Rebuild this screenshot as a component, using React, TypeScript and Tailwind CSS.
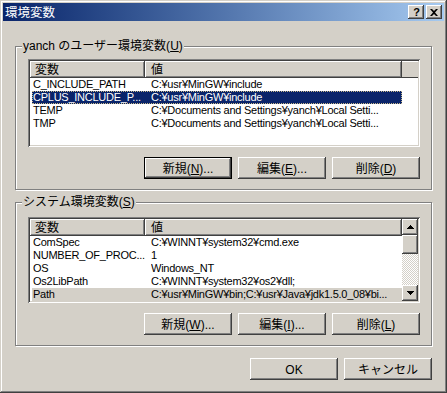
import React from "react";

const RAISED =
  "shadow-[inset_-1px_-1px_#404040,inset_1px_1px_#ffffff,inset_-2px_-2px_#808080,inset_2px_2px_#d4d0c8]";
const DEFAULT_BTN =
  "shadow-[inset_0_0_0_1px_#000000,inset_-2px_-2px_#404040,inset_2px_2px_#ffffff,inset_-3px_-3px_#808080]";
const SUNKEN =
  "shadow-[inset_1px_1px_#808080,inset_-1px_-1px_#ffffff,inset_2px_2px_#404040,inset_-2px_-2px_#d4d0c8]";
const FRAME =
  "shadow-[inset_-1px_-1px_#404040,inset_1px_1px_#d4d0c8,inset_-2px_-2px_#808080,inset_2px_2px_#ffffff]";
const HEADER =
  "shadow-[inset_-1px_-1px_#404040,inset_1px_1px_#ffffff,inset_-2px_-2px_#808080]";

const U = ({ c }: { c: string }) => (
  <span className="underline underline-offset-[1px] decoration-1">{c}</span>
);

function Btn({ children, def }: { children: React.ReactNode; def?: boolean }) {
  return (
    <div
      className={`h-[22px] w-[88px] flex items-center justify-center text-[12px] leading-none text-black bg-[#d4d0c8] ${
        def ? DEFAULT_BTN : RAISED
      }`}
    >
      <span className="pt-[1px]">{children}</span>
    </div>
  );
}

type Row = { name: string; value: string; sel?: "active" | "inactive" };

const userRows: Row[] = [
  { name: "C_INCLUDE_PATH", value: "C:¥usr¥MinGW¥include" },
  { name: "CPLUS_INCLUDE_P...", value: "C:¥usr¥MinGW¥include", sel: "active" },
  { name: "TEMP", value: "C:¥Documents and Settings¥yanch¥Local Setti..." },
  { name: "TMP", value: "C:¥Documents and Settings¥yanch¥Local Setti..." },
];

const sysRows: Row[] = [
  { name: "ComSpec", value: "C:¥WINNT¥system32¥cmd.exe" },
  { name: "NUMBER_OF_PROC...", value: "1" },
  { name: "OS", value: "Windows_NT" },
  { name: "Os2LibPath", value: "C:¥WINNT¥system32¥os2¥dll;" },
  {
    name: "Path",
    value: "C:¥usr¥MinGW¥bin;C:¥usr¥Java¥jdk1.5.0_08¥bi...",
    sel: "inactive",
  },
];

function Header() {
  return (
    <div className="h-[17px] flex shrink-0 text-[12px] leading-none text-black">
      <div className={`w-[115px] h-full bg-[#d4d0c8] ${HEADER} flex items-center pl-[5px]`}>
        変数
      </div>
      <div className={`w-[257px] h-full bg-[#d4d0c8] ${HEADER} flex items-center pl-[6px]`}>
        値
      </div>
      <div className="flex-1 h-full bg-[#d4d0c8] shadow-[inset_0_-1px_#404040,inset_0_1px_#ffffff]" />
    </div>
  );
}

function Rows({ rows }: { rows: Row[] }) {
  return (
    <div className="flex flex-col">
      {rows.map((r, i) => {
        const cls =
          r.sel === "active"
            ? "bg-[#0a246a] text-white outline-1 outline-dotted outline-[#c8b98a] -outline-offset-1"
            : r.sel === "inactive"
            ? "bg-[#d4d0c8] text-black"
            : "text-black";
        return (
          <div key={i} className="h-[13px] flex pl-[2px]">
            <div
              className={`w-[370px] h-full flex items-center text-[11px] tracking-[-0.25px] leading-none whitespace-nowrap overflow-hidden ${cls}`}
            >
              <div className="w-[119px] shrink-0 pl-[1px] overflow-hidden">{r.name}</div>
              <div className="flex-1 min-w-0 overflow-hidden">{r.value}</div>
            </div>
          </div>
        );
      })}
    </div>
  );
}

function Arrow({ up }: { up?: boolean }) {
  return (
    <svg width="7" height="4" viewBox="0 0 7 4">
      {up ? (
        <path d="M3 0h1v1h1v1h1v1h1v1H0V3h1V2h1V1h1z" fill="#000" />
      ) : (
        <path d="M0 0h7v1H6v1H5v1H4v1H3V3H2V2H1V1H0z" fill="#000" />
      )}
    </svg>
  );
}

function GroupBox({
  label,
  padTop,
  children,
}: {
  label: React.ReactNode;
  padTop: string;
  children: React.ReactNode;
}) {
  return (
    <div
      className={`relative h-[144px] border border-[#808080] shadow-[inset_1px_1px_#ffffff,1px_1px_#ffffff] pl-[12px] ${padTop} flex flex-col`}
    >
      <div className="absolute left-[6px] top-[-8px] px-[1px] bg-[#d4d0c8] text-[12px] leading-[14px] text-black whitespace-nowrap">
        {label}
      </div>
      {children}
    </div>
  );
}

export default function App() {
  return (
    <div
      className={`w-[447px] h-[393px] bg-[#d4d0c8] ${FRAME} p-[3px] flex flex-col font-['Liberation_Sans','Noto_Sans_CJK_JP',sans-serif]`}
    >
      {/* Title bar */}
      <div className="h-[18px] shrink-0 flex items-center justify-between bg-gradient-to-r from-[#0a246a] to-[#a6caf0] pl-[2px] pr-[2px]">
        <span className="text-white text-[12.5px] leading-none font-['Noto_Sans_CJK_JP',sans-serif]">
          環境変数
        </span>
        <div className="flex gap-[2px]">
          <div className={`w-[16px] h-[14px] bg-[#d4d0c8] ${RAISED} flex items-center justify-center`}>
            <span className="text-[11px] font-bold leading-none text-black font-['Liberation_Sans',sans-serif] pl-[1px]">
              ?
            </span>
          </div>
          <div className={`w-[16px] h-[14px] bg-[#d4d0c8] ${RAISED} flex items-center justify-center`}>
            <svg width="8" height="7" viewBox="0 0 8 7">
              <path
                d="M0 0h2l2 2 2-2h2v0L5 3.5 8 7H6L4 5 2 7H0l3-3.5L0 0z"
                fill="#000"
              />
            </svg>
          </div>
        </div>
      </div>

      <div className="px-[12px] flex flex-col">
        {/* User variables */}
        <div className="mt-[25px]">
          <GroupBox
            padTop="pt-[12px]"
            label={
              <>
                yanch のユーザー環境変数(<U c="U" />)
              </>
            }
          >
            <div className={`w-[392px] h-[88px] bg-white ${SUNKEN} p-[2px] flex flex-col overflow-hidden`}>
              <Header />
              <Rows rows={userRows} />
            </div>
            <div className="w-[392px] mt-[10px] flex justify-end gap-[6px]">
              <Btn def>
                新規(<U c="N" />)...
              </Btn>
              <Btn>
                編集(<U c="E" />)...
              </Btn>
              <Btn>
                削除(<U c="D" />)
              </Btn>
            </div>
          </GroupBox>
        </div>

        {/* System variables */}
        <div className="mt-[12px]">
          <GroupBox
            padTop="pt-[14px]"
            label={
              <>
                システム環境変数(<U c="S" />)
              </>
            }
          >
            <div className={`w-[392px] h-[86px] bg-white ${SUNKEN} p-[2px] flex overflow-hidden`}>
              <div className="w-[372px] flex flex-col">
                <Header />
                <Rows rows={sysRows} />
              </div>
              <div className="w-[16px] flex flex-col">
                <div className={`h-[16px] bg-[#d4d0c8] ${RAISED} flex items-center justify-center`}>
                  <Arrow up />
                </div>
                <div className={`h-[19px] bg-[#d4d0c8] ${RAISED}`} />
                <div className="flex-1 bg-[repeating-conic-gradient(#ffffff_0%_25%,#d4d0c8_0%_50%)] bg-size-[2px_2px]" />
                <div className={`h-[16px] bg-[#d4d0c8] ${RAISED} flex items-center justify-center`}>
                  <Arrow />
                </div>
              </div>
            </div>
            <div className="w-[392px] mt-[10px] flex justify-end gap-[6px]">
              <Btn>
                新規(<U c="W" />)...
              </Btn>
              <Btn>
                編集(<U c="I" />)...
              </Btn>
              <Btn>
                削除(<U c="L" />)
              </Btn>
            </div>
          </GroupBox>
        </div>

        {/* OK / Cancel */}
        <div className="mt-[12px] flex justify-end gap-[6px]">
          <Btn>OK</Btn>
          <Btn>キャンセル</Btn>
        </div>
      </div>
    </div>
  );
}
